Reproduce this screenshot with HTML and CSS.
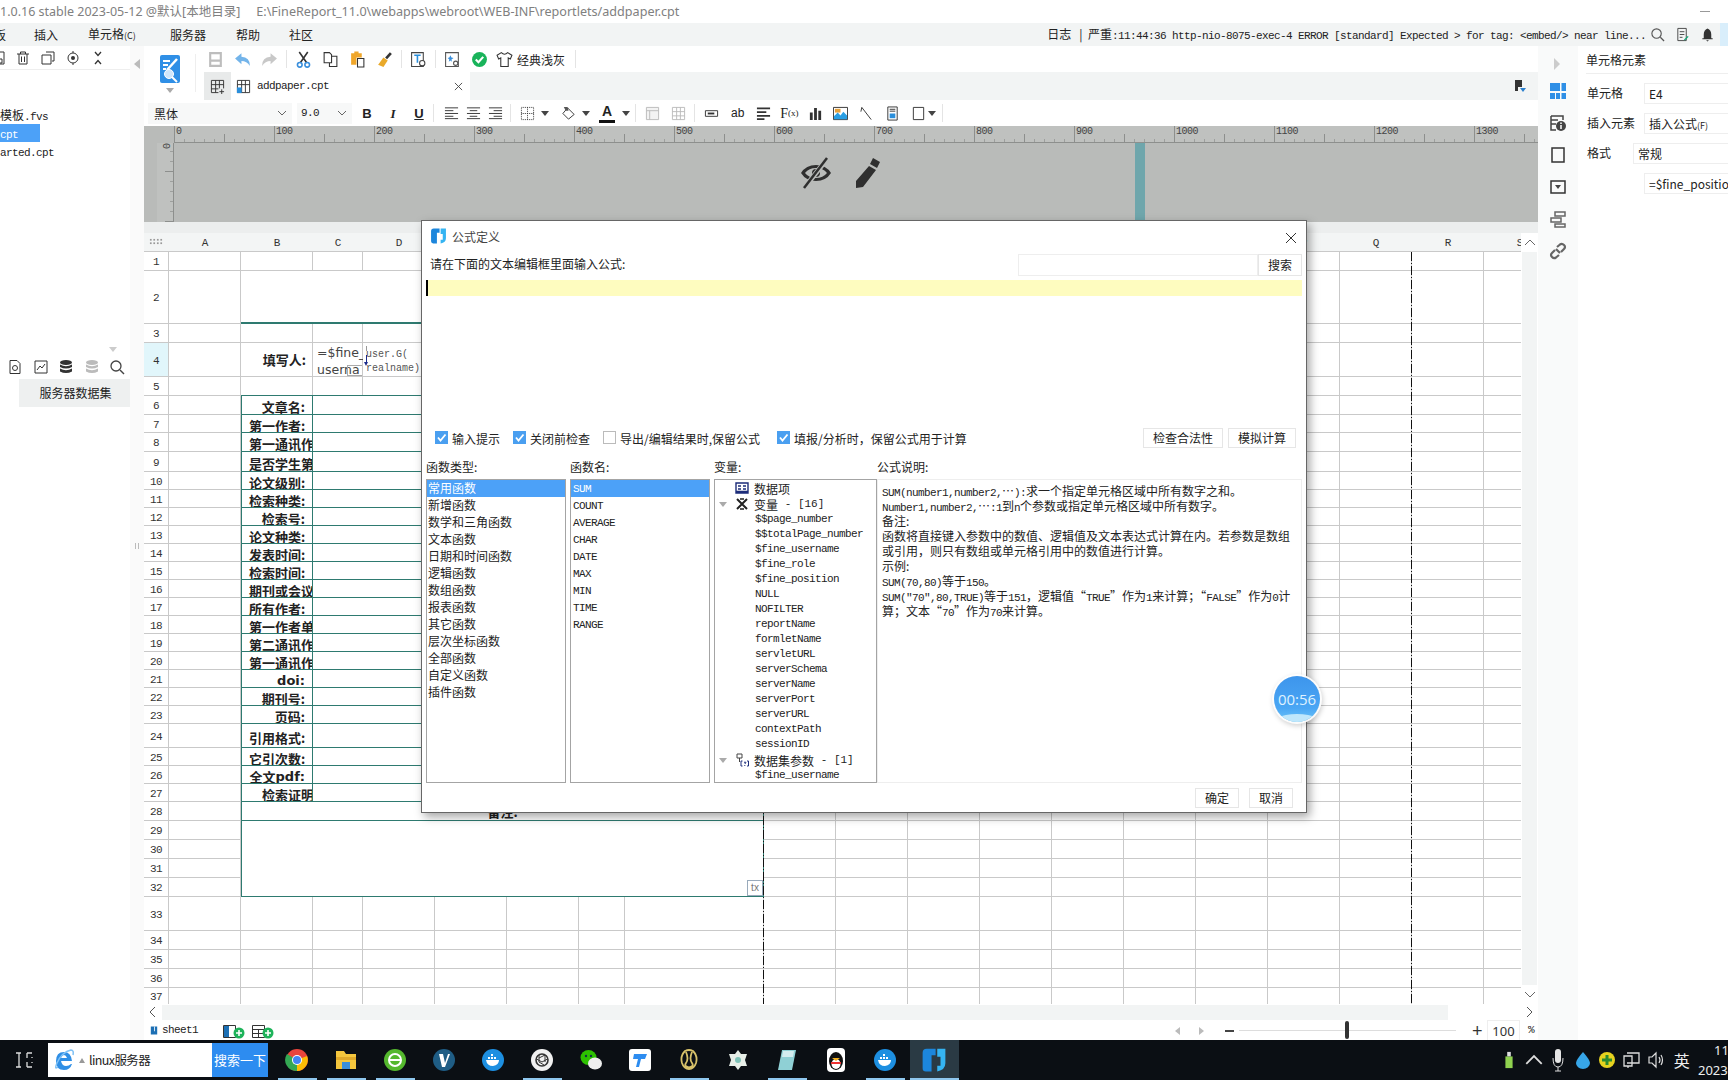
FILE: index.html
```html
<!doctype html>
<html lang="zh-CN">
<head>
<meta charset="utf-8">
<title>FineReport</title>
<link rel="stylesheet" href="styles.css">
</head>
<body>
<svg class="sprite" width="0" height="0">
  <symbol id="fr" viewBox="0 0 16 16"><path fill="#1c86dc" d="M1 3.500Q1 1 3.500 1H9V5H6.500V15H3Q1 15 1 13Z"/><path fill="#35b4f2" d="M10 1H15V10Q15 14 10 15V11.500H12V6H10Z"/></symbol>
  <symbol id="chk" viewBox="0 0 13 13"><path fill="none" stroke="#fff" stroke-width="1.800" d="M3 6.500 5.500 9.500 10.500 3.500"/></symbol>
  <symbol id="chev" viewBox="0 0 10 6"><path fill="none" stroke="#666" d="M1 1 5 5 9 1"/></symbol>
  <symbol id="tri" viewBox="0 0 8 5"><path fill="#444" d="M0 0H8L4 5Z"/></symbol>
</svg>

<div class="titlebar">
  <span>1.0.16 stable 2023-05-12 @默认[本地目录]</span>
  <span class="path">E:\FineReport_11.0\webapps\webroot\WEB-INF\reportlets/addpaper.cpt</span>
  <span class="minimize"></span>
</div>

<div class="menubar">
  <span class="m0">板</span><span class="m1">插入</span><span class="m2">单元格<small>(C)</small></span><span class="m3">服务器</span><span class="m4">帮助</span><span class="m5">社区</span>
  <div class="log">日志 &nbsp;&nbsp;|&nbsp; 严重<span class="mono">:11:44:36 http-nio-8075-exec-4 ERROR [standard] Expected &gt; for tag: &lt;embed/&gt; near line...</span></div>
  <svg class="mi" viewBox="0 0 16 16"><circle cx="7" cy="7" r="5" fill="none" stroke="#555" stroke-width="1.200"/><path stroke="#555" stroke-width="1.400" d="M11 11 15 15"/></svg>
  <svg class="mi" viewBox="0 0 16 16"><path fill="none" stroke="#444" d="M3 1.500H12V14.500H3ZM5 5H10M5 8H10M5 11H8"/><path stroke="#1a7" stroke-width="1.500" d="M10 14 14 10"/></svg>
  <svg class="mi" viewBox="0 0 16 16"><path fill="#333" d="M8 1.500Q12 3 12 8V12H13.500V13H2.500V12H4V8Q4 3 8 1.500ZM6.500 14H9.500L8 15.500Z"/></svg>
  <span class="menu-blue"></span>
</div>

<div class="workspace">
  <aside class="leftpane">
    <div class="left-main">
      <div class="left-tools">
        <svg class="li clip" viewBox="0 0 14 14"><path fill="none" stroke="#333" d="M1 1H13V13H1ZM6 8H11V12H6Z"/></svg>
        <svg class="li" viewBox="0 0 14 14"><path fill="none" stroke="#333" d="M1 3H13M4.500 3V1H9.500V3M3 3V13H11V3M5.500 5.500V11M8.500 5.500V11"/></svg>
        <svg class="li" viewBox="0 0 14 14"><path fill="none" stroke="#333" d="M5 1H13V10H11M1 4H10V13H1Z"/></svg>
        <svg class="li" viewBox="0 0 14 14"><circle cx="7" cy="7" r="5" fill="none" stroke="#333"/><circle cx="7" cy="7" r="2" fill="#333"/><path stroke="#333" d="M7 0V2M7 12V14"/></svg>
        <svg class="li" viewBox="0 0 14 14"><path fill="none" stroke="#333" stroke-width="1.300" d="M4 1 7 4.500 10 1M4 13 7 9.500 10 13"/></svg>
      </div>
      <div class="file-list">
        <div class="file">模板<span class="mono">.fvs</span></div>
        <div class="file sel"><span class="mono">cpt</span></div>
        <div class="file"><span class="mono">arted.cpt</span></div>
      </div>
      <div class="left-split"><svg class="splitmark" viewBox="0 0 8 5"><path fill="#ccc" d="M0 0H8L4 5Z"/></svg></div>
      <div class="ds-tools">
        <svg class="ds" viewBox="0 0 16 16"><path fill="none" stroke="#333" d="M3 1.500H10L13 4.500V14.500H3Z"/><circle cx="8" cy="9" r="2.500" fill="none" stroke="#333"/></svg>
        <svg class="ds" viewBox="0 0 16 16"><path fill="none" stroke="#333" d="M2 2H14V14H2ZM4 11 7 7 9 9 12 5"/></svg>
        <svg class="ds" viewBox="0 0 16 16"><ellipse cx="8" cy="3.500" rx="6" ry="2.500" fill="#333"/><path fill="#333" d="M2 5.500Q8 9 14 5.500V8Q8 11 2 8ZM2 9.500Q8 13 14 9.500V12.500Q8 15.500 2 12.500Z"/></svg>
        <svg class="ds" viewBox="0 0 16 16"><ellipse cx="8" cy="3.500" rx="6" ry="2.500" fill="#bbb"/><path fill="#bbb" d="M2 5.500Q8 9 14 5.500V8Q8 11 2 8ZM2 9.500Q8 13 14 9.500V12.500Q8 15.500 2 12.500Z"/></svg>
        <svg class="ds" viewBox="0 0 16 16"><circle cx="7" cy="7" r="5" fill="none" stroke="#444" stroke-width="1.300"/><path stroke="#444" stroke-width="1.500" d="M11 11 15 15"/></svg>
      </div>
      <div class="ds-btn">服务器数据集</div>
    </div>
    <div class="left-strip">
      <svg class="collapse" viewBox="0 0 6 10"><path fill="#bbb" d="M6 0V10L0 5Z"/></svg>
      <span class="grip"></span>
    </div>
  </aside>

  <main class="center">
    <div class="top">
      <div class="bigicon">
        <svg width="22" height="28" viewBox="0 0 22 28"><rect x="1" width="20" height="28" rx="2" fill="#2f8fe6"/><path stroke="#fff" stroke-width="2" d="M4 6H11M4 10H9M4 14H7"/><path stroke="#fff" stroke-width="2.500" d="M8 15 18 4"/><circle cx="10" cy="19" r="4.500" fill="#cfe6fb" stroke="#fff"/><path stroke="#fff" stroke-width="2" d="M13 22 18 27"/></svg>
        <svg class="bigarrow" viewBox="0 0 8 5"><path fill="#aaa" d="M0 0H8L4 5Z"/></svg>
      </div>
      <div class="top-right">
        <div class="toolbar">
          <span class="tb"><svg viewBox="0 0 16 16"><path fill="#bdbdbd" d="M2 1H14V15H2ZM4 3V8H12V3ZM4 10V13H12V10Z"/></svg></span>
          <span class="tb"><svg viewBox="0 0 16 16"><path fill="#73b4ea" d="M1 7 7 2V5.500Q15 6 15 14Q12 9.500 7 9.500V12.500Z"/></svg></span>
          <span class="tb"><svg viewBox="0 0 16 16"><path fill="#c8c8c8" d="M15 7 9 2V5.500Q1 6 1 14Q4 9.500 9 9.500V12.500Z"/></svg></span>
          <span class="sep s1"></span>
          <span class="tb"><svg viewBox="0 0 16 16"><path stroke="#333" stroke-width="1.500" d="M4 1 11 11M12 1 5 11"/><circle cx="4.500" cy="13" r="2.200" fill="none" stroke="#3a8fdc" stroke-width="1.500"/><circle cx="11.500" cy="13" r="2.200" fill="none" stroke="#3a8fdc" stroke-width="1.500"/></svg></span>
          <span class="tb"><svg viewBox="0 0 16 16"><path fill="none" stroke="#333" d="M2 1.500H7L9 3.500V11H2ZM9 5H14V14.500H7V11"/></svg></span>
          <span class="tb"><svg viewBox="0 0 16 16"><path fill="#f0a629" d="M2 2H5V0.500H9V2H12V6H7V13H2Z"/><path fill="#fff" stroke="#333" d="M8 7H14V15H8Z"/></svg></span>
          <span class="tb"><svg viewBox="0 0 16 16"><path fill="#e9a92a" d="M2 13 7 6 11 9 7 15Z"/><path stroke="#333" stroke-width="2.500" d="M9.500 7 14 2"/></svg></span>
          <span class="sep s2"></span>
          <span class="tb"><svg viewBox="0 0 16 16"><path fill="none" stroke="#444" d="M1.500 1.500H12.500V14.500H1.500Z"/><path stroke="#2a8fdc" stroke-width="1.500" d="M4 4H10M7 4V11"/><circle cx="11.500" cy="11.500" r="2.500" fill="#fff" stroke="#444"/></svg></span>
          <span class="sep s2"></span>
          <span class="tb"><svg viewBox="0 0 16 16"><path fill="none" stroke="#555" d="M1.500 1.500H13.500V14.500H1.500Z"/><path fill="#3a8fdc" d="M6 4 7 6 9 6.500 7 8 7.500 10 6 9 4.500 10 5 8 3.500 6.500 5 6Z"/><circle cx="11" cy="11.500" r="2" fill="#fff" stroke="#555"/></svg></span>
          <span class="tb"><svg viewBox="0 0 16 16"><circle cx="8" cy="8" r="7" fill="#19b35a"/><path fill="none" stroke="#fff" stroke-width="2" d="M4.500 8 7 10.500 11.500 5.500"/></svg></span>
          <span class="tb shirt"><svg viewBox="0 0 16 16"><path fill="none" stroke="#333" d="M5 1.500 1 4 2.500 7.500 4.500 6.500V14.500H11.500V6.500L13.500 7.500 15 4 11 1.500Q8 4.500 5 1.500Z"/></svg></span>
          <span class="theme">经典浅灰</span>
          <span class="sep s3"></span>
        </div>
        <div class="tabs">
          <span class="newtab"><svg viewBox="0 0 16 16"><path fill="none" stroke="#333" d="M1.500 1.500H14.500V10M1.500 1.500V14.500H9M1.500 6H14.500M1.500 10.500H9M6 1.500V14.500M10 1.500V10M12.500 11V16M10 13.500H15"/></svg></span>
          <div class="tab">
            <svg class="tabic" viewBox="0 0 16 16"><path fill="none" stroke="#333" d="M1.500 1.500H14.500V14.500H1.500ZM1.500 6H14.500M6 1.500V14.500M10 1.500V14.500"/><path fill="#2a8fdc" d="M1 9H6V15H1Z"/></svg>
            <span class="mono tabname">addpaper.cpt</span>
            <svg class="tabx" viewBox="0 0 10 10"><path stroke="#444" d="M1 1 9 9M9 1 1 9"/></svg>
          </div>
          <svg class="pin" viewBox="0 0 12 14"><path fill="#333" d="M1 1H8V8H4V12H1Z"/><path fill="#2a7fcc" d="M6 9H12L9 13Z"/></svg>
        </div>
      </div>
    </div>

    <div class="formatbar">
      <div class="sel-box font"><span>黑体</span><svg class="chev"><use href="#chev"/></svg></div>
      <div class="sel-box size"><span class="mono">9.0</span><svg class="chev"><use href="#chev"/></svg></div>
      <span class="fb bold">B</span><span class="fb ital">I</span><span class="fb under">U</span>
      <span class="sep s4"></span>
      <span class="al"><svg viewBox="0 0 16 14"><path stroke="#333" d="M1 1.500H15M1 4.500H10M1 7.500H15M1 10.500H10M1 13H15"/></svg></span>
      <span class="al"><svg viewBox="0 0 16 14"><path stroke="#333" d="M1 1.500H15M4 4.500H12M1 7.500H15M4 10.500H12M1 13H15"/></svg></span>
      <span class="al"><svg viewBox="0 0 16 14"><path stroke="#333" d="M1 1.500H15M6 4.500H15M1 7.500H15M6 10.500H15M1 13H15"/></svg></span>
      <span class="sep s5"></span>
      <span class="drop d1"><svg viewBox="0 0 16 16"><path fill="none" stroke="#333" stroke-dasharray="1 1" d="M1.500 1.500H14.500V14.500H1.500ZM1.500 8H14.500M8 1.500V14.500"/></svg><svg class="tri"><use href="#tri"/></svg></span>
      <span class="drop d2"><svg viewBox="0 0 16 16"><path fill="none" stroke="#333" d="M7 2 14 9 8 14 2 8Z"/><path fill="#555" d="M3 1 7 1 8 5 5 5Z"/></svg><svg class="tri"><use href="#tri"/></svg></span>
      <span class="drop d3"><span class="fontcolor">A</span><svg class="tri"><use href="#tri"/></svg></span>
      <span class="sep s6"></span>
      <span class="tb2 w1"><svg viewBox="0 0 16 16"><path fill="#f3f3f3" stroke="#bbb" d="M1.500 1.500H14.500V14.500H1.500Z"/><path stroke="#bbb" d="M1.500 5H14.500M5 5V14.500"/></svg></span>
      <span class="tb2 w2"><svg viewBox="0 0 16 16"><path fill="none" stroke="#bbb" d="M1.500 1.500H14.500V14.500H1.500ZM1.500 6H14.500M1.500 10.500H14.500M6 1.500V14.500M10 1.500V14.500"/></svg></span>
      <span class="sep s7"></span>
      <span class="tb2"><svg viewBox="0 0 16 16"><path fill="none" stroke="#333" d="M1.500 5H14.500V11H1.500Z"/><path stroke="#333" stroke-width="2" d="M4 8H11"/></svg></span>
      <span class="tb2 ab">ab</span>
      <span class="tb2"><svg viewBox="0 0 16 16"><path fill="#333" d="M1 1.500H15V3.500H1ZM1 5.500H11V7.500H1ZM1 9.500H15V11.500H1ZM1 13H9V15H1Z"/></svg></span>
      <span class="tb2 fx">F<small>(x)</small></span>
      <span class="tb2"><svg viewBox="0 0 16 16"><path fill="#333" d="M2 7H5V15H2ZM6.500 2H9.500V15H6.500ZM11 5H14V15H11Z"/></svg></span>
      <span class="tb2"><svg viewBox="0 0 16 16"><path fill="#fff" stroke="#333" d="M.5 1.500H15.500V14.500H.5Z"/><path fill="#e6a13c" d="M2 3H8V7H2Z"/><path fill="#2a9fe4" d="M1 14V11L5 7 8 10 11 6 15 10V14Z"/></svg></span>
      <span class="tb2"><svg viewBox="0 0 16 16"><path fill="none" stroke="#333" d="M3 1.500 13 14.500M3 1.500 2 6"/></svg></span>
      <span class="tb2"><svg viewBox="0 0 16 16"><path fill="none" stroke="#333" d="M3 1H13V15H3ZM5 3.500H11M5 5.500H11"/><path fill="#2a8fdc" d="M5 8H11V13H5Z"/></svg></span>
      <span class="tb2"><svg viewBox="0 0 16 16"><path fill="none" stroke="#333" d="M2.500 1.500H13.500V14.500H2.500Z"/></svg></span>
      <svg class="tri lone"><use href="#tri"/></svg>
      <span class="sep s8"></span>
    </div>

    <div class="ruler">
      <div class="ruler-top">
        <div class="ticks h">
          <span>0</span><span>100</span><span>200</span><span>300</span><span>400</span><span>500</span><span>600</span><span>700</span><span>800</span><span>900</span><span>1000</span><span>1100</span><span>1200</span><span>1300</span>
        </div>
      </div>
      <div class="ruler-body">
        <div class="ticks v"><span>0</span></div>
        <div class="canvas">
          <svg class="eye" viewBox="0 0 32 32"><path fill="#2f2f2f" d="M16 8Q26 8 31 16Q26 24 16 24Q6 24 1 16Q6 8 16 8ZM16 11Q9 11 5 16Q9 21 16 21Q23 21 27 16Q23 11 16 11Z"/><circle cx="16" cy="16" r="4" fill="#2f2f2f"/><path stroke="#b9bbb9" stroke-width="5" d="M27 2 5 30"/><path stroke="#2f2f2f" stroke-width="2.500" d="M27 1 4 31"/></svg>
          <svg class="pencil" viewBox="0 0 32 32"><path fill="#2f2f2f" d="M22 1 29 5 26 11 19 7ZM18 9 25 13 12 30 5 31 5 24Z"/></svg>
          <span class="tealbar"></span>
        </div>
      </div>
    </div>
    <div class="band"></div>

    <div class="sheetwrap">
      <div class="sheet">
        <div class="cols"><i></i><i></i><i></i><i></i><i></i><i></i><i></i><i></i><i></i><i></i><i></i><i></i><i></i><i></i><i></i><i></i><i></i><i></i><i></i></div>
        <div class="rows">
          <div class="row hdr h19">
            <span class="corner"></span><span>A</span><span>B</span><span>C</span><span>D</span><span>E</span><span>F</span><span>G</span><span>H</span><span>I</span><span>J</span><span>K</span><span>L</span><span>M</span><span>N</span><span>O</span><span>P</span><span>Q</span><span>R</span><span>S</span>
          </div>
          <div class="row h19"><span class="rh">1</span></div>
          <div class="row h53"><span class="rh">2</span><span class="titlecell"></span></div>
          <div class="row h19"><span class="rh">3</span></div>
          <div class="row h34"><span class="rh act">4</span><span class="plain">填写人:</span><span class="formula">=$fine_<br>userna<i class="cellbox"></i></span><span class="gfunc"><b class="arrow-a"></b>user.G(<br>realname)<b class="arrow-b"></b></span></div>
          <div class="row h19"><span class="rh">5</span></div>
          <div class="row f first h19"><span class="rh">6</span><span class="lbl">文章名:</span><span class="val"></span></div>
          <div class="row f h18"><span class="rh">7</span><span class="lbl">第一作者:</span><span class="val"></span></div>
          <div class="row f h19"><span class="rh">8</span><span class="lbl">第一通讯作</span><span class="val"></span></div>
          <div class="row f h20"><span class="rh">9</span><span class="lbl">是否学生第</span><span class="val"></span></div>
          <div class="row f h18"><span class="rh">10</span><span class="lbl">论文级别:</span><span class="val"></span></div>
          <div class="row f h18"><span class="rh">11</span><span class="lbl">检索种类:</span><span class="val"></span></div>
          <div class="row f h18"><span class="rh">12</span><span class="lbl">检索号:</span><span class="val"></span></div>
          <div class="row f h18"><span class="rh">13</span><span class="lbl">论文种类:</span><span class="val"></span></div>
          <div class="row f h18"><span class="rh">14</span><span class="lbl">发表时间:</span><span class="val"></span></div>
          <div class="row f h18"><span class="rh">15</span><span class="lbl">检索时间:</span><span class="val"></span></div>
          <div class="row f h18"><span class="rh">16</span><span class="lbl">期刊或会议</span><span class="val"></span></div>
          <div class="row f h18"><span class="rh">17</span><span class="lbl">所有作者:</span><span class="val"></span></div>
          <div class="row f h18"><span class="rh">18</span><span class="lbl">第一作者单</span><span class="val"></span></div>
          <div class="row f h18"><span class="rh">19</span><span class="lbl">第二通讯作</span><span class="val"></span></div>
          <div class="row f h18"><span class="rh">20</span><span class="lbl">第一通讯作</span><span class="val"></span></div>
          <div class="row f h18"><span class="rh">21</span><span class="lbl latin">doi:</span><span class="val"></span></div>
          <div class="row f h18"><span class="rh">22</span><span class="lbl">期刊号:</span><span class="val"></span></div>
          <div class="row f h18"><span class="rh">23</span><span class="lbl">页码:</span><span class="val"></span></div>
          <div class="row f h24"><span class="rh">24</span><span class="lbl">引用格式:</span><span class="val"></span></div>
          <div class="row f h18"><span class="rh">25</span><span class="lbl">它引次数:</span><span class="val"></span></div>
          <div class="row f h18"><span class="rh">26</span><span class="lbl">全文<span class="latin">pdf:</span></span><span class="val"></span></div>
          <div class="row f h18"><span class="rh">27</span><span class="lbl ind">检索证明</span><span class="val"></span></div>
          <div class="row h19"><span class="rh">28</span><span class="merged note">备注:</span></div>
          <div class="row h19"><span class="rh">29</span><span class="merged box"></span></div>
          <div class="row h19"><span class="rh">30</span><span class="merged box"></span></div>
          <div class="row h19"><span class="rh">31</span><span class="merged box"></span></div>
          <div class="row h19"><span class="rh">32</span><span class="merged box end"><i class="tx">tx</i></span></div>
          <div class="row h34"><span class="rh">33</span></div>
          <div class="row h19"><span class="rh">34</span></div>
          <div class="row h19"><span class="rh">35</span></div>
          <div class="row h19"><span class="rh">36</span></div>
          <div class="row h15 nob"><span class="rh">37</span></div>
        </div>
        <span class="pagebreak p1"></span>
        <span class="pagebreak p2"></span>
      </div>
      <div class="vscroll">
        <svg class="sc" viewBox="0 0 12 7"><path fill="none" stroke="#666" d="M1 6 6 1 11 6"/></svg>
        <div class="vtrack"></div>
        <svg class="sc" viewBox="0 0 12 7"><path fill="none" stroke="#666" d="M1 1 6 6 11 1"/></svg>
      </div>
    </div>

    <div class="hscroll">
      <svg class="hs" viewBox="0 0 7 12"><path fill="none" stroke="#555" d="M6 1 1 6 6 11"/></svg>
      <div class="htrack"></div>
      <svg class="hs right" viewBox="0 0 7 12"><path fill="none" stroke="#555" d="M1 1 6 6 1 11"/></svg>
    </div>

    <div class="sheettabs">
      <svg class="st0" viewBox="0 0 10 12"><path fill="#1c6fb4" d="M1 1H9V11H1Z"/><path fill="#fff" d="M5 1H6V7H5Z"/></svg>
      <span class="mono">sheet1</span>
      <svg class="addic first-add" viewBox="0 0 24 16"><path fill="#fff" stroke="#333" d="M1.500 2.500H13.500V14.500H1.500Z"/><path fill="#1c6fb4" d="M2 3H7V14H2Z"/><circle cx="17" cy="10" r="5.500" fill="#1eb35a"/><path stroke="#fff" stroke-width="1.600" d="M14 10H20M17 7V13"/></svg>
      <svg class="addic" viewBox="0 0 24 16"><path fill="#fff" stroke="#333" d="M1.500 2.500H13.500V14.500H1.500ZM1.500 6.500H13.500M1.500 10.500H13.500M7.500 6.500V14.500"/><circle cx="17" cy="10" r="5.500" fill="#1eb35a"/><path stroke="#fff" stroke-width="1.600" d="M14 10H20M17 7V13"/></svg>
      <div class="zoom">
        <svg class="nav" viewBox="0 0 5 8"><path fill="#bbb" d="M5 0V8L0 4Z"/></svg>
        <svg class="nav n2" viewBox="0 0 5 8"><path fill="#bbb" d="M0 0V8L5 4Z"/></svg>
        <span class="minus"></span>
        <div class="slider"><span class="thumb"></span></div>
        <span class="plus">+</span>
        <span class="zoomval">100</span>
        <span class="pct mono">%</span>
      </div>
    </div>
  </main>

  <aside class="rightpane">
    <div class="rstrip">
      <svg class="arrowr" viewBox="0 0 6 12"><path fill="#ccc" d="M0 0 6 6 0 12Z"/></svg>
      <svg class="ri" viewBox="0 0 18 18"><path fill="#2f8fe6" d="M1 1H11V9H1ZM12.500 1H17V9H12.500ZM1 11H6V17H1ZM7 11H11V17H7ZM12.500 11H17V17H12.500Z"/></svg>
      <svg class="ri" viewBox="0 0 18 18"><path fill="none" stroke="#444" stroke-width="1.500" d="M2 2H14V6M2 2V16H7M2 6H9M2 10H7"/><circle cx="12" cy="12" r="5" fill="#444"/><path stroke="#fff" stroke-width="1.500" d="M12 11V15M12 8.500V10"/></svg>
      <svg class="ri" viewBox="0 0 18 18"><path fill="none" stroke="#333" stroke-width="1.500" d="M3 2H15V16H3Z"/></svg>
      <svg class="ri" viewBox="0 0 18 18"><path fill="none" stroke="#333" stroke-width="1.500" d="M2 3H16V15H2Z"/><path fill="#444" d="M6 7H12L9 11Z"/></svg>
      <svg class="ri" viewBox="0 0 18 18"><path fill="none" stroke="#666" stroke-width="1.500" d="M6 2H16V6H6ZM2 8H12V12H2ZM6 14H16V17H6Z"/></svg>
      <svg class="ri" viewBox="0 0 18 18"><path fill="none" stroke="#666" stroke-width="2.200" d="M8 5 11 2.500Q13 1 15 3T15 7L12 10M10 13 7 15.500Q5 17 3 15T3 11L6 8M7 7 11 11"/></svg>
    </div>
    <div class="props">
      <div class="ptitle">单元格元素</div>
      <div class="prow"><span class="pl">单元格</span><span class="pv">E4</span></div>
      <div class="prow"><span class="pl">插入元素</span><span class="pv">插入公式<small>(F)</small></span></div>
      <div class="prow"><span class="pl short">格式</span><span class="pv">常规</span></div>
      <div class="prow"><span class="pl"></span><span class="pv">=$fine_position</span></div>
    </div>
  </aside>
</div>

<footer class="taskbar">
  <span class="start"><svg viewBox="0 0 18 16"><path fill="none" stroke="#ddd" stroke-width="1.300" d="M1 1H6M1 15H6M4 1V15M12 1H17M12 15H17M12 1V6M17 5V6M12 10V15M17 10V11"/></svg></span>
  <div class="searchbox">
    <svg class="ie" viewBox="0 0 20 22"><path fill="#2f8fe6" d="M10 3Q17 3 18 12H7Q8 17 12 17Q15 17 17 15H18Q16 21 10 21Q2 21 2 12Q2 3 10 3ZM7 9H13Q12 6 10 6Q8 6 7 9Z"/><path fill="none" stroke="#7fc1f5" stroke-width="1.500" d="M4 18Q0 21 3 14Q8 3 17 1Q20 1 19 6"/></svg>
    <span class="sbtri"></span>
    <span class="sbtext">linux服务器</span>
    <span class="sbbtn">搜索一下</span>
  </div>
  <div class="apps">
    <span class="app on"><svg viewBox="0 0 24 24"><circle cx="12" cy="12" r="11" fill="#e8453c"/><path fill="#fbbc05" d="M12 12 22 8A11 11 0 0 1 12 23Z"/><path fill="#34a853" d="M12 12 12 23A11 11 0 0 1 2 6Z"/><circle cx="12" cy="12" r="5" fill="#fff"/><circle cx="12" cy="12" r="4" fill="#4285f4"/></svg></span>
    <span class="app on"><svg viewBox="0 0 24 24"><path fill="#f4c63d" d="M2 3H10L12 6H22V21H2Z"/><path fill="#3a8fdc" d="M8 14H16V21H8Z"/><path fill="#e0a92a" d="M2 9H22V12H2Z"/></svg></span>
    <span class="app on"><svg viewBox="0 0 24 24"><circle cx="12" cy="12" r="11" fill="#55b82e"/><circle cx="12" cy="12" r="6" fill="none" stroke="#fff" stroke-width="2"/><path stroke="#fff" stroke-width="2" d="M6 12H18"/></svg></span>
    <span class="app"><svg viewBox="0 0 24 24"><circle cx="12" cy="12" r="11" fill="#1f5d85"/><path fill="#fff" d="M7 6H11L13 15 16 6H18L13 19H10Z"/></svg></span>
    <span class="app"><svg viewBox="0 0 24 24"><circle cx="12" cy="12" r="11" fill="#1d8fe1"/><path fill="#fff" d="M5 12H18Q18 17 12 18Q6 18 5 12ZM7 9H9V11H7ZM10 9H12V11H10ZM13 9H15V11H13ZM10 6H12V8H10Z"/></svg></span>
    <span class="app on"><svg viewBox="0 0 24 24"><circle cx="12" cy="12" r="11" fill="#f1f1f1"/><circle cx="12" cy="12" r="6" fill="none" stroke="#333" stroke-width="1.600"/><path fill="none" stroke="#333" d="M9 7V14L14 17M15 7 9 10M15 7V14M6.500 11 12 14M17.500 11 12 14"/></svg></span>
    <span class="app"><svg viewBox="0 0 24 24"><ellipse cx="9.500" cy="9.500" rx="8" ry="7.500" fill="#2dc100"/><ellipse cx="16" cy="15.500" rx="7" ry="6" fill="#eee"/><circle cx="7" cy="8" r="1.200" fill="#134"/><circle cx="12" cy="8" r="1.200" fill="#134"/></svg></span>
    <span class="app"><svg viewBox="0 0 24 24"><rect x="1" y="1" width="22" height="22" rx="3" fill="#fff"/><path fill="#2d8cf0" d="M6 6H19L17 11H13L11 19H8L10 11H5Z"/></svg></span>
    <span class="app on"><svg viewBox="0 0 24 24"><path fill="none" stroke="#d8c26a" stroke-width="1.800" d="M8 3Q12 1 16 3Q21 8 19 15Q17 21 12 21Q7 21 5 15Q3 8 8 3ZM9 4Q12 11 9 15T15 20M15 4Q12 11 15 15T9 20"/></svg></span>
    <span class="app"><svg viewBox="0 0 24 24"><path fill="#e8efe8" d="M12 2 15 6 21 6 19 12 21 18 15 18 12 22 9 18 3 18 5 12 3 6 9 6Z"/><circle cx="12" cy="12" r="3" fill="#7fc3b8"/></svg></span>
    <span class="app on"><svg viewBox="0 0 24 24"><path fill="#8fd0d5" d="M7 2H21L17 22H3Z"/><path fill="#d4ecef" d="M8 3H19L18 9H7Z"/></svg></span>
    <span class="app"><svg viewBox="0 0 24 24"><rect x="3" y="0" width="18" height="24" rx="4" fill="#fff"/><ellipse cx="12" cy="13" rx="7" ry="9" fill="#111"/><ellipse cx="12" cy="16" rx="4.500" ry="5" fill="#fff"/><path fill="#f6b21b" d="M8 10H16L12 13Z"/><path fill="#e33" d="M7 14H17V16H7Z"/></svg></span>
    <span class="app on"><svg viewBox="0 0 24 24"><circle cx="12" cy="12" r="11" fill="#1d8fe1"/><path fill="#fff" d="M5 12H18Q18 17 12 18Q6 18 5 12ZM7 9H9V11H7ZM10 9H12V11H10ZM13 9H15V11H13ZM10 6H12V8H10Z"/></svg></span>
    <span class="app on active"><svg><use href="#fr"/></svg></span>
  </div>
  <div class="tray">
    <span class="t"><svg viewBox="0 0 10 20"><path fill="#8fd14f" d="M1 6H9V19H1Z"/><path fill="#ddd" d="M3 1H7V6H3Z"/></svg></span>
    <span class="t"><svg viewBox="0 0 14 8"><path fill="none" stroke="#ddd" stroke-width="1.400" d="M1 7 7 1 13 7"/></svg></span>
    <span class="t"><svg viewBox="0 0 12 24"><rect x="3" y="1" width="6" height="14" rx="3" fill="#e5e5e5"/><path fill="none" stroke="#ddd" d="M1 10Q1 19 6 19Q11 19 11 10M6 19V23M3 23H9"/></svg></span>
    <span class="t"><svg viewBox="0 0 18 18"><path fill="#37a6e8" d="M9 1Q16 9 16 12A7 6 0 0 1 2 12Q2 9 9 1Z"/></svg></span>
    <span class="t"><svg viewBox="0 0 18 18"><circle cx="9" cy="9" r="8" fill="#e6d21f"/><path stroke="#2b8a2f" stroke-width="3" d="M9 4V14M4 9H14"/></svg></span>
    <span class="t"><svg viewBox="0 0 18 18"><path fill="none" stroke="#ddd" stroke-width="1.300" d="M4 2H16V12H4M1 5H9V15H1ZM5 15V17"/></svg></span>
    <span class="t"><svg viewBox="0 0 18 18"><path fill="none" stroke="#ddd" stroke-width="1.200" d="M2 6H5L9 2V16L5 12H2ZM12 6Q14 9 12 12M14 4Q17 9 14 14"/></svg></span>
    <span class="ime">英</span>
    <div class="clock"><span class="hh">11</span><span>2023-</span></div>
  </div>
</footer>

<section class="dialog">
  <header class="dlg-title">
    <svg class="dlg-logo"><use href="#fr"/></svg>
    <span>公式定义</span>
    <svg class="dlg-x" viewBox="0 0 12 12"><path stroke="#333" d="M1 1 11 11M11 1 1 11"/></svg>
  </header>
  <div class="dlg-search">
    <span class="prompt">请在下面的文本编辑框里面输入公式:</span>
    <span class="s-input"></span>
    <span class="btn s-btn">搜索</span>
  </div>
  <div class="editor"><div class="curline"></div></div>
  <div class="options">
    <span class="cb on"><svg><use href="#chk"/></svg></span><span class="cl w1">输入提示</span>
    <span class="cb on"><svg><use href="#chk"/></svg></span><span class="cl w2">关闭前检查</span>
    <span class="cb"></span><span class="cl w3">导出/编辑结果时,保留公式</span>
    <span class="cb on"><svg><use href="#chk"/></svg></span><span class="cl w4">填报/分析时&#xFF0C;保留公式用于计算</span>
    <span class="btn o1">检查合法性</span>
    <span class="btn o2">模拟计算</span>
  </div>
  <div class="panels">
    <div class="pane">
      <div class="plabel">函数类型:</div>
      <div class="listbox">
        <div class="it sel">常用函数</div><div class="it">新增函数</div><div class="it">数学和三角函数</div><div class="it">文本函数</div><div class="it">日期和时间函数</div><div class="it">逻辑函数</div><div class="it">数组函数</div><div class="it">报表函数</div><div class="it">其它函数</div><div class="it">层次坐标函数</div><div class="it">全部函数</div><div class="it">自定义函数</div><div class="it">插件函数</div>
      </div>
    </div>
    <div class="pane">
      <div class="plabel">函数名:</div>
      <div class="listbox names">
        <div class="it sel">SUM</div><div class="it">COUNT</div><div class="it">AVERAGE</div><div class="it">CHAR</div><div class="it">DATE</div><div class="it">MAX</div><div class="it">MIN</div><div class="it">TIME</div><div class="it">RANGE</div>
      </div>
    </div>
    <div class="pane">
      <div class="plabel">变量:</div>
      <div class="treebox">
        <div class="tr"><span class="arw"></span><svg class="ti" viewBox="0 0 14 14"><path fill="none" stroke="#1d2d7a" stroke-width="1.400" d="M1 2H13V12H1ZM3 5H6M3 8H6M8 5H11M8 8H11M1 10.500H13"/></svg>数据项</div>
        <div class="tr"><svg class="arw down" viewBox="0 0 8 5"><path fill="#aaa" d="M0 0H8L4 5Z"/></svg><svg class="ti" viewBox="0 0 14 14"><path fill="none" stroke="#222" stroke-width="2" d="M2 2 12 12M12 2 2 12"/><path stroke="#222" stroke-width="1.500" d="M5 2H9M5 12H9"/></svg>变量 <span class="mono gap">- [16]</span></div>
        <div class="tr sub">$$page_number</div>
        <div class="tr sub">$$totalPage_number</div>
        <div class="tr sub">$fine_username</div>
        <div class="tr sub">$fine_role</div>
        <div class="tr sub">$fine_position</div>
        <div class="tr sub">NULL</div>
        <div class="tr sub">NOFILTER</div>
        <div class="tr sub">reportName</div>
        <div class="tr sub">formletName</div>
        <div class="tr sub">servletURL</div>
        <div class="tr sub">serverSchema</div>
        <div class="tr sub">serverName</div>
        <div class="tr sub">serverPort</div>
        <div class="tr sub">serverURL</div>
        <div class="tr sub">contextPath</div>
        <div class="tr sub">sessionID</div>
        <div class="tr"><svg class="arw down" viewBox="0 0 8 5"><path fill="#aaa" d="M0 0H8L4 5Z"/></svg><svg class="ti" viewBox="0 0 14 14"><path fill="none" stroke="#444" d="M2 1H7V5H2ZM4.500 5V9"/><path fill="none" stroke="#1d2d7a" d="M7.500 8H6V13H7.500M12 8H13.500V13H12M9 9.500Q10 8.500 11 9.500L9.800 11M9.800 12V13"/></svg>数据集参数 <span class="mono gap">- [1]</span></div>
        <div class="tr sub">$fine_username</div>
      </div>
    </div>
    <div class="pane">
      <div class="plabel">公式说明:</div>
      <div class="desc">
        <div><span class="mono">SUM(number1,number2,</span>…<span class="mono">):</span>求一个指定单元格区域中所有数字之和。</div>
        <div><span class="mono">Number1,number2,</span>…<span class="mono">:1</span>到<span class="mono">n</span>个参数或指定单元格区域中所有数字。</div>
        <div>备注:</div>
        <div>函数将直接键入参数中的数值、逻辑值及文本表达式计算在内。若参数是数组</div>
        <div>或引用&#xFF0C;则只有数组或单元格引用中的数值进行计算。</div>
        <div>示例:</div>
        <div><span class="mono">SUM(70,80)</span>等于<span class="mono">150</span>。</div>
        <div><span class="mono">SUM("70",80,TRUE)</span>等于<span class="mono">151</span>&#xFF0C;逻辑值“<span class="mono">TRUE</span>”作为<span class="mono">1</span>来计算&#xFF1B;“<span class="mono">FALSE</span>”作为<span class="mono">0</span>计</div>
        <div>算&#xFF1B;文本“<span class="mono">70</span>”作为<span class="mono">70</span>来计算。</div>
      </div>
    </div>
  </div>
  <div class="dlg-foot">
    <span class="btn">确定</span>
    <span class="btn">取消</span>
  </div>
</section>

<div class="timer"><span>00:56</span></div>
</body>
</html>
```

FILE: styles.css
```css
*{box-sizing:border-box}
html,body{margin:0;padding:0}
body{width:1728px;height:1080px;overflow:hidden;position:relative;background:#fff;display:flex;flex-direction:column;font-family:"Noto Sans CJK SC","Noto Sans",sans-serif;font-size:12px;line-height:15px;color:#222}
svg{display:block;flex:none}
.sprite{position:absolute}
.mono{font-family:"Liberation Mono",monospace;font-size:11px;letter-spacing:-.6px}

.titlebar{height:23px;flex:none;display:flex;align-items:center;color:#808080;font-size:12.500px;font-family:"Noto Sans","Noto Sans CJK SC",sans-serif;white-space:nowrap}
.path{margin-left:16px;font-size:12.600px}
.minimize{width:10px;height:1px;background:#999;margin-left:auto;margin-right:18px}

.menubar{height:23px;flex:none;background:#f2f4f4;display:flex;align-items:center;white-space:nowrap}
.menubar small{font-size:9px}
.m0{flex:none;width:40px;margin-left:-6px}
.m1{width:54px}.m2{width:82px}.m3{width:66px}.m4{width:53px}.m5{width:40px}
.log{margin-left:auto;margin-right:-6px}
.mi{width:15px;height:15px;margin-left:10px}
.menu-blue{width:8px;height:23px;background:#d9eefb;margin-left:5px}

.workspace{height:994px;flex:none;display:flex}

.leftpane{width:144px;flex:none;display:flex}
.left-main{width:130px;flex:none}
.left-tools{height:24px;border-bottom:1px solid #eee;display:flex;align-items:center;width:136px}
.li{width:14px;height:14px;margin-right:11px}
.li.clip{margin-left:-9px}
.file-list{margin-top:36px}
.file{height:18px;line-height:18px;white-space:nowrap}
.file.sel{background:#4ca1f8;color:#fff;width:40px}
.left-split{margin-top:181px;height:22px;display:flex;justify-content:center}
.splitmark{width:8px;height:5px;margin-left:96px;margin-top:6px}
.ds-tools{height:24px;display:flex;align-items:center;padding-left:7px;margin-top:-8px}
.ds{width:16px;height:16px;margin-right:9.500px}
.ds-btn{margin:0 0 0 19px;width:113px;height:28px;line-height:28px;background:#eef0f0;text-align:center;color:#222;font-size:12px}
.left-strip{width:14px;background:#fafafa;position:relative;display:flex;flex-direction:column;align-items:center;padding-top:13px}
.collapse{width:6px;height:10px}
.grip{width:4px;height:6px;border-left:1px solid #bbb;border-right:1px solid #bbb;margin-top:474px}

.center{width:1394px;flex:none;display:flex;flex-direction:column}
.top{height:54px;flex:none;display:flex}
.bigicon{width:60px;flex:none;padding:9px 0 0 15px;display:flex;flex-direction:column;position:relative}
.bigicon::after{content:"";position:absolute;left:51px;top:8px;height:38px;width:1px;background:#eee}
.bigarrow{width:8px;height:5px;margin:5px 0 0 7px}
.top-right{flex:1;min-width:0;display:flex;flex-direction:column}
.toolbar{height:26px;display:flex;align-items:center;margin-left:-2px}
.tb{width:27px;height:26px;display:flex;align-items:center;justify-content:center}
.tb svg{width:17px;height:17px}
.tb.shirt{width:22px}
.sep{width:1px;height:18px;background:#e4e4e4;flex:none}
.s1{margin:0 3px}.s2{margin:0 3px}
.s3{margin-left:10px}
.theme{margin-left:2px;white-space:nowrap}
.tabs{height:28px;background:#f2f4f4;display:flex;align-items:stretch;position:relative}
.newtab{width:27px;background:#e8eaea;display:flex;align-items:center;justify-content:center}
.newtab svg{width:15px;height:15px}
.tab{width:239px;background:#fff;display:flex;align-items:center;padding-left:5px}
.tabic{width:15px;height:15px}
.tabname{margin-left:6px}
.tabx{width:9px;height:9px;margin-left:auto;margin-right:7px}
.pin{width:12px;height:14px;align-self:center;margin-left:auto;margin-right:12px}

.formatbar{height:26px;flex:none;display:flex;align-items:center;padding-left:4px}
.sel-box{height:21px;background:#f7f8f8;display:flex;align-items:center;padding-left:6px;justify-content:space-between;padding-right:5px;font-size:12px}
.sel-box.font{width:144px;margin-right:5px}
.sel-box.size{width:55px;padding-left:4px;margin-right:2px}
.chev{width:10px;height:6px}
.fb{width:26px;text-align:center;font-size:13px;color:#222}
.bold{font-weight:700;font-family:"Liberation Sans",sans-serif}
.ital{font-style:italic;font-weight:700;font-family:"Liberation Serif",serif}
.under{text-decoration:underline;font-weight:700;font-family:"Liberation Sans",sans-serif}
.s4{margin:0 6px 0 1px}.s5{margin:0 5px 0 4px}.s6{margin:0 3px 0 0}.s7{margin:0 4px 0 3px}.s8{margin-left:6px}
.al{width:22px;display:flex;justify-content:center}
.al svg{width:15px;height:14px}
.drop{display:flex;align-items:center;height:20px}
.drop svg:first-child{width:15px;height:15px}
.tri{width:8px;height:5px}
.d1{width:41px;padding-left:4px;gap:6px}
.d2{width:39px;padding-left:4px;gap:6px}
.d3{width:39px;padding-left:3px;gap:7px}
.fontcolor{width:16px;text-align:center;font:700 14px/14px "Liberation Sans",sans-serif;border-bottom:3px solid #111;height:19px}
.tb2{width:25.800px;display:flex;align-items:center;justify-content:center;font-family:"Liberation Sans",sans-serif;color:#222;font-size:12px}
.tb2 svg{width:15px;height:15px}
.tb2.w1,.tb2.w2{width:26px}
.fx{font-family:"Liberation Serif",serif;font-size:14px}
.fx small{font-size:9px}
.tri.lone{margin-left:-3px}

.ruler{height:96px;flex:none;background:#b9bbb9;display:flex;flex-direction:column}
.ruler-top{height:17px;padding-left:30px;flex:none}
.ticks{color:#444;font-family:"Liberation Mono",monospace;font-size:10px;letter-spacing:-.5px}
.ticks.h{height:17px;display:flex;border-bottom:1px solid #8d8f8d;
  background:
   repeating-linear-gradient(90deg,#8d8f8d 0 1px,transparent 1px 100px) 0 100%/100% 16px no-repeat,
   repeating-linear-gradient(90deg,#8d8f8d 0 1px,transparent 1px 50px) 0 100%/100% 8px no-repeat,
   repeating-linear-gradient(90deg,#9d9f9d 0 1px,transparent 1px 10px) 0 100%/100% 3px no-repeat,
   #bfc1bf}
.ticks.h span{width:100px;flex:none;padding-left:2px;line-height:12px}
.ruler-body{flex:1;display:flex;padding-left:13px}
.ticks.v{width:17px;flex:none;border-right:1px solid #8d8f8d;background:
   repeating-linear-gradient(0deg,#8d8f8d 0 1px,transparent 1px 50px) 100% 0/8px 100% no-repeat,
   repeating-linear-gradient(0deg,#9d9f9d 0 1px,transparent 1px 10px) 100% 0/3px 100% no-repeat,
   #bfc1bf}
.ticks.v span{display:block;writing-mode:vertical-rl;padding:0 0 0 3px;line-height:10px}
.canvas{flex:1;display:flex;padding-left:626px}
.eye{width:32px;height:32px;margin-top:14px}
.pencil{width:32px;height:32px;margin:14px 0 0 19px}
.tealbar{width:10px;margin-left:252px;background:#6fa6ac}
.band{height:11px;flex:none;background:#eceeee}

.sheetwrap{height:771px;flex:none;display:flex}
.sheet{--grid:25px 72px 72px 50px 72px 72px 72px 46px 139px repeat(11,72px);width:1377px;flex:none;position:relative;overflow:hidden;background:#fff;z-index:0}
.cols{position:absolute;left:0;top:0;bottom:0;width:1556px;display:grid;grid-template-columns:var(--grid);z-index:0}
.cols i{border-right:1px solid #c9c9c9}
.rows{position:relative;z-index:1;width:1556px}
.row{display:grid;grid-template-columns:var(--grid);grid-template-rows:minmax(0,1fr);border-bottom:1px solid #c9c9c9}
.h15{height:15px}.h18{height:18px}.h19{height:19px}.h20{height:20px}.h24{height:24px}.h34{height:34px}.h53{height:53px}
.nob{border-bottom:0}
.rh{display:flex;align-items:center;justify-content:center;padding-top:3px;line-height:11px;min-height:0;font-family:"Liberation Mono",monospace;font-size:11px;letter-spacing:-.5px;color:#333;background:#fff;border-right:1px solid #c9c9c9}
.rh.act{background:#e1f6fb}
.hdr{background:#f3f5f5}
.hdr span{display:flex;align-items:center;justify-content:center;padding-top:3px;line-height:11px;font-family:"Liberation Mono",monospace;font-size:11px;color:#333}
.hdr .corner{padding:0;background:radial-gradient(circle,#999 .8px,transparent 1px) 0 0/3.500px 3.500px;margin:5px 6px 6px 5px}

.titlecell{grid-column:3/span 7;background:#fff;border-bottom:2px solid #2e7a70;margin-bottom:-1px}
.plain{grid-column:3;display:flex;align-items:center;justify-content:flex-end;padding-right:7px;font-weight:700;font-size:13px;color:#222}
.formula{position:relative;padding:1px 0 0 4px;font:12.500px/17px "DejaVu Sans",sans-serif;color:#444;white-space:nowrap;overflow:hidden}
.cellbox{position:absolute;right:1px;top:22px;width:15px;height:11px;border:1px solid #aaa;border-right:0}
.gfunc{position:relative;padding:5px 0 0 3px;font:10px/14px "Liberation Mono",monospace;color:#555;white-space:nowrap;overflow:hidden;grid-column:5}
.arrow-a,.arrow-b{position:absolute;left:3px;width:1px}
.arrow-a{top:3px;height:5px;background:#999}
.arrow-b{top:12px;height:9px;background:#1a2a8a}
.arrow-b::after{content:"";position:absolute;left:-2px;bottom:-2px;border:2.500px solid transparent;border-top:4px solid #1a2a8a;border-bottom:0}
.gfunc{overflow:visible}
.lbl{grid-column:3;display:flex;align-items:center;justify-content:safe flex-end;white-space:nowrap;overflow:hidden;padding:3px 7px 0;line-height:11px;min-height:0;font-weight:700;font-size:13px;color:#222;background:#fff;border-left:1px solid #2e7a70;border-right:1px solid #2e7a70;border-bottom:1px solid #2e7a70;margin-bottom:-1px}
.lbl.ind{padding-left:20px;padding-right:0}
.latin{font-family:"DejaVu Sans",sans-serif}
.val{grid-column:4/span 6;background:#fff;border-bottom:1px solid #2e7a70;margin-bottom:-1px}
.first .lbl,.first .val{border-top:1px solid #2e7a70;margin-top:-1px}
.first .lbl{padding-top:2px}
.merged{grid-column:3/span 7;background:#fff;border-left:1px solid #2e7a70;border-right:1px solid #2e7a70;position:relative}
.note{font-weight:700;font-size:13px;text-align:center;line-height:19px;border-bottom:1px solid #2e7a70;margin-bottom:-1px}
.box{margin-bottom:-1px}
.box.end{border-bottom:1px solid #2e7a70}
.tx{position:absolute;right:0;bottom:0;width:16px;height:16px;border:1px solid #9ab;font:normal 10px/13px "Liberation Sans",sans-serif;color:#777;text-align:center}
.pagebreak{position:absolute;width:1px;background:repeating-linear-gradient(180deg,#111 0 9px,transparent 9px 11px,#111 11px 12px,transparent 12px 14px);z-index:2;bottom:0}
.p1{left:1267px;top:19px}
.p2{left:619px;top:569px}

.vscroll{width:17px;flex:none;display:flex;flex-direction:column;align-items:center}
.sc{width:12px;height:7px;margin:6px 0;flex:none}
.vtrack{flex:1;width:15px;background:#f2f4f4}

.hscroll{height:16px;flex:none;display:flex;align-items:center}
.hs{width:7px;height:12px;margin-left:5px}
.htrack{width:1286px;margin-left:6px;height:15px;background:#f2f4f4}
.hs.right{margin-left:78px}
.sheettabs{height:21px;flex:none;display:flex;align-items:center;padding-left:6px;background:#fff}
.st0{width:8px;height:11px;margin-right:4px}
.addic{width:24px;height:16px;margin-right:5px}
.first-add{margin-left:24px}
.zoom{margin-left:auto;display:flex;align-items:center;height:100%}
.nav{width:5px;height:8px;margin-right:19px}
.n2{margin-right:21px}
.minus{width:9px;height:2px;background:#444;margin-right:5px}
.slider{width:217px;height:1px;background:#ddd;position:relative;margin-right:16px}
.thumb{position:absolute;left:106px;top:-9px;width:4px;height:18px;background:#333;border-radius:2px}
.plus{font:18px/18px "Liberation Sans",sans-serif;color:#333;margin-right:4px;width:11px}
.zoomval{width:33px;height:21px;border:1px solid #eee;text-align:center;font:13px/20px "Noto Sans",sans-serif;color:#333}
.pct{margin:0 4px 0 8px}

.rightpane{width:190px;flex:none;display:flex}
.rstrip{width:40px;flex:none;background:#f9fafa;display:flex;flex-direction:column;align-items:center;padding-top:12px}
.arrowr{width:6px;height:12px;margin-bottom:12px;margin-left:-2px}
.ri{width:18px;height:18px;margin-bottom:14px}
.props{flex:1;padding-left:10px;overflow:hidden;white-space:nowrap}
.ptitle{height:28px;line-height:28px;border-bottom:1px solid #eee;margin-left:-2px;margin-bottom:9px}
.prow{height:30px;display:flex;align-items:flex-start;margin-left:-1px}
.pl{width:57px;line-height:20px;flex:none}
.pl.short{width:46px}
.pv{width:200px;height:21px;line-height:19px;border:1px solid #eee;padding-left:4px;flex:none;font-size:12px}
.pv small{font-size:9px}

.taskbar{height:40px;flex:none;background:#0b0f14;display:flex;align-items:center;color:#eee}
.start{width:48px;display:flex;justify-content:center}
.start svg{width:18px;height:16px}
.searchbox{width:220px;height:34px;background:#fff;display:flex;align-items:center;position:relative;color:#222}
.ie{width:20px;height:22px;margin-left:6px}
.sbtri{width:0;height:0;border:3px solid transparent;border-bottom:5px solid #999;border-top:0;margin-left:5px}
.sbtext{margin-left:4px;font-size:12.500px;letter-spacing:-.6px;line-height:34px}
.sbbtn{margin-left:auto;width:56px;height:34px;background:#2d8cf0;color:#fff;text-align:center;line-height:34px;font-size:13px;white-space:nowrap}
.apps{display:flex;margin-left:4.500px;height:40px}
.app{width:49px;height:40px;display:flex;align-items:center;justify-content:center;position:relative}
.app svg{width:24px;height:24px}
.app.on::after{content:"";position:absolute;left:5px;right:5px;bottom:0;height:2px;background:#8fc7ee}
.app.active{background:#2a3a44}
.app.active::after{left:0;right:0}
.app.active svg{width:26px;height:26px}
.tray{margin-left:auto;display:flex;align-items:center;height:40px;margin-right:-40px;width:271px;flex:none}
.t{width:24.500px;display:flex;justify-content:center}
.t svg{width:18px;height:18px}
.t:nth-child(3) svg{height:24px}
.ime{width:24.500px;font-size:16px;color:#eee;margin-left:1px;text-align:center}
.clock{display:flex;flex-direction:column;font:13px/20px "Noto Sans",sans-serif;margin-left:4px;width:60px}
.hh{margin-left:16px}

.dialog{position:absolute;left:421px;top:220px;width:886px;height:593px;background:#fff;border:1px solid #666;box-shadow:3px 4px 9px rgba(0,0,0,.35);z-index:10;display:flex;flex-direction:column}
.dlg-title{height:33px;flex:none;display:flex;align-items:center;padding:0 9px 3px 8px;color:#444;gap:5px}
.dlg-logo{width:17px;height:18px}
.dlg-x{width:12px;height:12px;margin-left:auto;margin-top:3px}
.dlg-search{height:22px;flex:none;display:flex;align-items:center;padding:0 4px 0 8px}
.prompt{margin-top:-3px}
.s-input{width:240px;height:22px;border:1px solid #eee;margin-left:auto}
.btn{border:1px solid #e6e6e6;text-align:center;line-height:18px;height:20px;white-space:nowrap;color:#222;display:block}
.s-btn{width:44px;height:22px;line-height:20px}
.editor{height:145px;flex:none;margin:4px 4px 0;background:#fff}
.curline{height:16px;background:#fefcbf;border-left:2px solid #000}
.options{height:25px;flex:none;display:flex;align-items:center;padding-left:13px}
.cb{width:13px;height:13px;border:1px solid #bbb;flex:none}
.cb.on{background:#4a9ff0;border-color:#4a9ff0}
.cb svg{width:13px;height:13px;margin:-1px}
.cl{margin-left:4px;white-space:nowrap;padding-top:1px}
.w1{width:61px}.w2{width:73px}.w3{width:157px}.w4{width:349px}
.o1{width:80px}
.o2{width:68px;margin-left:5px}
.panels{display:grid;grid-template-columns:144px 144px 163px 425px;padding-left:4px;flex:none}
.plabel{height:29px;padding-top:8px;line-height:17px}
.listbox{width:140px;height:304px;border:1px solid #a4a4a4;overflow:hidden}
.it{height:17px;line-height:16px;padding-left:1px;white-space:nowrap}
.it.sel{background:#4ca1f8;color:#fff}
.names .it{font-family:"Liberation Mono",monospace;font-size:11px;line-height:18px;letter-spacing:-.6px;padding-left:2px}
.treebox{width:163px;height:304px;border:1px solid #a4a4a4;overflow:hidden}
.tr{height:16px;display:flex;align-items:center;white-space:pre}
.arw{width:8px;height:5px;margin:0 4px;flex:none}
.ti{width:14px;height:14px;margin:0 5px 0 4px}
.tr.sub{height:15px;padding-left:40px;font:11px/17px "Liberation Mono",monospace;letter-spacing:-.6px;color:#222}
.gap{margin-left:4px;letter-spacing:0}
.desc{height:304px;border:1px solid #eee;padding:3px 0 0 4px;white-space:nowrap;overflow:hidden}
.desc div{height:15px;line-height:15px}
.dlg-foot{display:flex;justify-content:flex-end;gap:10px;padding:5px 13px 0 0}
.dlg-foot .btn{width:44px}

.timer{position:absolute;left:1274px;top:676px;width:46px;height:46px;border-radius:50%;z-index:20;display:flex;align-items:center;justify-content:center;color:#dff1ff;font:15px/1 "Open Sans",sans-serif;overflow:hidden;background:linear-gradient(180deg,#3d95ec 0,#4aa6f4 70%,#6cc6f8 100%);box-shadow:0 0 0 2px rgba(255,255,255,.9),1px 2px 5px 2px rgba(0,0,0,.18)}
.timer::after{content:"";position:absolute;left:-6px;right:-6px;bottom:-20px;height:28px;border-radius:50%;background:#bfe7fb}
.timer span{position:relative;z-index:1}
```
